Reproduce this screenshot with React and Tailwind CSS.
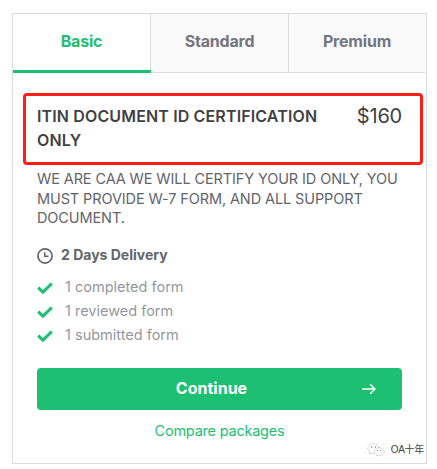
import { useState } from 'react';

const tabs = ['Basic', 'Standard', 'Premium'];

const features = ['1 completed form', '1 reviewed form', '1 submitted form'];

const ClockIcon = () => (
  <svg className="h-4 w-4 shrink-0" viewBox="0 0 16 16" fill="none">
    <circle cx="8" cy="8" r="7.1" stroke="#62646a" strokeWidth="1.7" />
    <path d="M7.7 4.2v4.1h3.8" stroke="#62646a" strokeWidth="1.6" />
  </svg>
);

const CheckIcon = () => (
  <svg className="h-3 w-4 shrink-0" viewBox="0 0 16 12" fill="none">
    <path d="M1.2 5.6l4.7 4.5 8.9-8.6" stroke="#1dbf73" strokeWidth="3.1" />
  </svg>
);

const ArrowIcon = () => (
  <svg className="h-3 w-[14px]" viewBox="0 0 14 12" fill="none">
    <path
      d="M0 6h12.6M8.2 1.2L13 6l-4.8 4.8"
      stroke="#fff"
      strokeWidth="1.5"
    />
  </svg>
);

const ChatIcon = () => (
  <svg className="h-[14px] w-[18px]" viewBox="0 0 18 14" fill="none">
    <g stroke="#aaa" strokeWidth="0.8" strokeDasharray="1.6 1.2">
      <path d="M11.8 4.3C11 2.2 9 .7 6.6.7 3.4.7.8 2.8.8 5.5c0 1.5.9 2.9 2.2 3.8L2.5 11l2.1-1c.8.2 1.5.3 2.3.2" />
      <ellipse cx="12.2" cy="8.7" rx="4.9" ry="4.1" />
    </g>
    <g fill="#777">
      <circle cx="4.7" cy="4" r="0.7" />
      <circle cx="8.5" cy="4" r="0.7" />
      <circle cx="10.6" cy="7.5" r="0.6" />
      <circle cx="13.7" cy="7.5" r="0.6" />
    </g>
  </svg>
);

const App = () => {
  const [active, setActive] = useState('Basic');

  return (
    <div className="h-[469px] w-[437px] bg-white pt-[13px] pl-3 font-['Inter',sans-serif]">
      <div className="relative h-[451px] w-[415px] border border-[#dadbdd]">
        <div className="mr-px flex h-[59px]">
          {tabs.map((tab) => (
            <button
              key={tab}
              type="button"
              onClick={() => setActive(tab)}
              className={
                active === tab
                  ? 'w-[138px] border-b-[3px] border-[#1dbf73] bg-white pr-px pb-[3px] text-base font-bold tracking-[-0.2px] text-[#1dbf73] shadow-[inset_-1px_0_0_#dadbdd]'
                  : 'w-[138px] border-r border-b border-[#dadbdd] bg-[#fafafa] pb-[5px] text-base font-bold tracking-[-0.2px] text-[#74767e] last:w-[136px] last:border-r-0'
              }
            >
              {tab}
            </button>
          ))}
        </div>

        <div className="mt-5 ml-[10px] flex h-[72px] w-[400px] justify-between rounded-[4px] border-[3px] border-[#ff1f14] pt-2 pr-[18px] pl-[11px] text-[#404145]">
          <h1 className="w-[295px] text-base font-semibold tracking-[0.14px]">
            ITIN DOCUMENT ID CERTIFICATION ONLY
          </h1>
          <span className="text-xl leading-6 tracking-[-0.2px]">$160</span>
        </div>

        <div className="px-6 pt-1">
          <p className="text-[14.5px] leading-[19.5px] tracking-[-0.11px] whitespace-nowrap text-[#62646a]">
            WE ARE CAA WE WILL CERTIFY YOUR ID ONLY, YOU
            <br />
            MUST PROVIDE W-7 FORM, AND ALL SUPPORT
            <br />
            DOCUMENT.
          </p>

          <div className="mt-4 flex h-6 items-center gap-2 text-sm font-bold text-[#62646a]">
            <ClockIcon />
            <span className="pb-0.5">2 Days Delivery</span>
          </div>

          <ul className="mt-2">
            {features.map((label) => (
              <li
                key={label}
                className="flex h-6 items-center gap-3 text-[14.5px] text-[#95979d]"
              >
                <CheckIcon />
                <span className="pb-px">{label}</span>
              </li>
            ))}
          </ul>

          <button
            type="button"
            className="mt-5 flex h-[42px] w-[365px] items-center rounded-[4px] bg-[#1dbf73] pr-[26px] pl-6 text-base font-bold text-white"
          >
            <span className="grow pb-0.5">Continue</span>
            <ArrowIcon />
          </button>
          <a
            href="#compare"
            className="mt-[9px] block w-[365px] text-center text-[14.5px] leading-6 tracking-[-0.22px] text-[#1dbf73]"
          >
            Compare packages
          </a>
        </div>

        <div className="absolute right-[2px] bottom-[6px] flex items-center gap-[6px] font-['Liberation_Sans','Noto_Sans_CJK_SC',sans-serif] text-[10px] leading-[14px] tracking-[-0.3px] whitespace-nowrap text-[#444]">
          <ChatIcon />
          <span>OA十年</span>
        </div>
      </div>
    </div>
  );
};

export default App;
